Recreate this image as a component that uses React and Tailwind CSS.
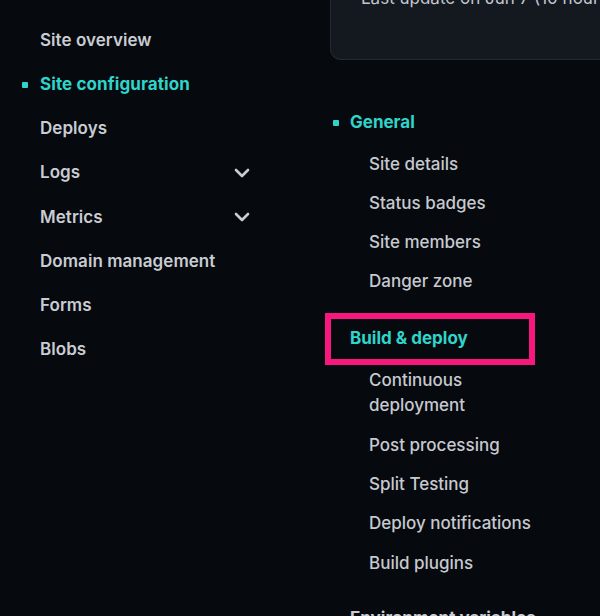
import React from "react";

const Chevron = () => (
  <svg width="24" height="24" viewBox="0 0 24 24" fill="none" stroke="#c9cdd3" strokeWidth="2.6" strokeLinecap="round" strokeLinejoin="round">
    <path d="m6 9 6 6 6-6" />
  </svg>
);

const leftItems = [
  { label: "Site overview" },
  { label: "Site configuration", active: true },
  { label: "Deploys" },
  { label: "Logs", chevron: true },
  { label: "Metrics", chevron: true },
  { label: "Domain management" },
  { label: "Forms" },
  { label: "Blobs" },
];

const generalItems = ["Site details", "Status badges", "Site members", "Danger zone"];
const buildItems = [
  ["Continuous", "deployment"],
  ["Post processing"],
  ["Split Testing"],
  ["Deploy notifications"],
  ["Build plugins"],
];

export default function App() {
  return (
    <div
      className="w-[600px] h-[616px] overflow-hidden bg-[#06090d] flex text-[17px]"
      style={{ fontFamily: "Inter, 'Noto Sans', sans-serif" }}
    >
      {/* Left nav */}
      <nav className="w-[330px] shrink-0 pt-[18.5px]">
        <ul className="flex flex-col">
          {leftItems.map((it) => (
            <li key={it.label} className="h-[44.2px] shrink-0 flex items-center pl-[22px] pr-[82px]">
              <span className="w-[18px] shrink-0 flex items-center">
                {it.active && <span className="w-[6px] h-[6px] rounded-[1px] bg-[#2fd4ca]" />}
              </span>
              <span
                className={
                  it.active
                    ? "font-bold text-[#2fd4ca] tracking-[0.1px]"
                    : "font-semibold text-[#c9cdd3] tracking-[0.05px]"
                }
              >
                {it.label}
              </span>
              {it.chevron && (
                <span className="ml-auto -mr-[6px] flex items-center">
                  <Chevron />
                </span>
              )}
            </li>
          ))}
        </ul>
      </nav>

      {/* Right column */}
      <div className="flex-1 flex flex-col">
        <div className="h-[60px] shrink-0 overflow-hidden bg-[#14181f] border-l border-b border-[#252a32] rounded-bl-[11px] pl-[30px]">
          <div className="-mt-[14px] leading-[25px] text-[#c2c6cc] whitespace-nowrap">
            Last update on Jun 7 (10 hours ago)
          </div>
        </div>

        <div className="mt-[50px] shrink-0 flex items-center leading-[25px]">
          <span className="ml-[3px] w-[6px] h-[6px] rounded-[1px] bg-[#2fd4ca]" />
          <span className="ml-[11px] font-bold text-[#2fd4ca]">General</span>
        </div>
        <ul className="mt-[16.5px] shrink-0 flex flex-col gap-[14.3px] pl-[39px]">
          {generalItems.map((t) => (
            <li key={t} className="leading-[25px] text-[#c6cad0] font-medium">
              {t}
            </li>
          ))}
        </ul>

        <div className="mt-[19px] shrink-0 -ml-[5px] w-[210px] h-[52px] border-[6px] border-[#f7187e] flex items-center pl-[19px] pb-[2px]">
          <span className="font-bold text-[#2fd4ca] leading-[25px]">Build &amp; deploy</span>
        </div>
        <ul className="mt-[3px] shrink-0 flex flex-col gap-[14.3px] pl-[39px]">
          {buildItems.map((lines) => (
            <li key={lines.join(" ")} className="leading-[25px] text-[#c6cad0] font-medium">
              {lines.map((l) => (
                <div key={l}>{l}</div>
              ))}
            </li>
          ))}
        </ul>

        <div className="mt-[30px] shrink-0 pl-[20px] leading-[25px] font-bold text-[#c9cdd3] whitespace-nowrap">
          Environment variables
        </div>
      </div>
    </div>
  );
}
